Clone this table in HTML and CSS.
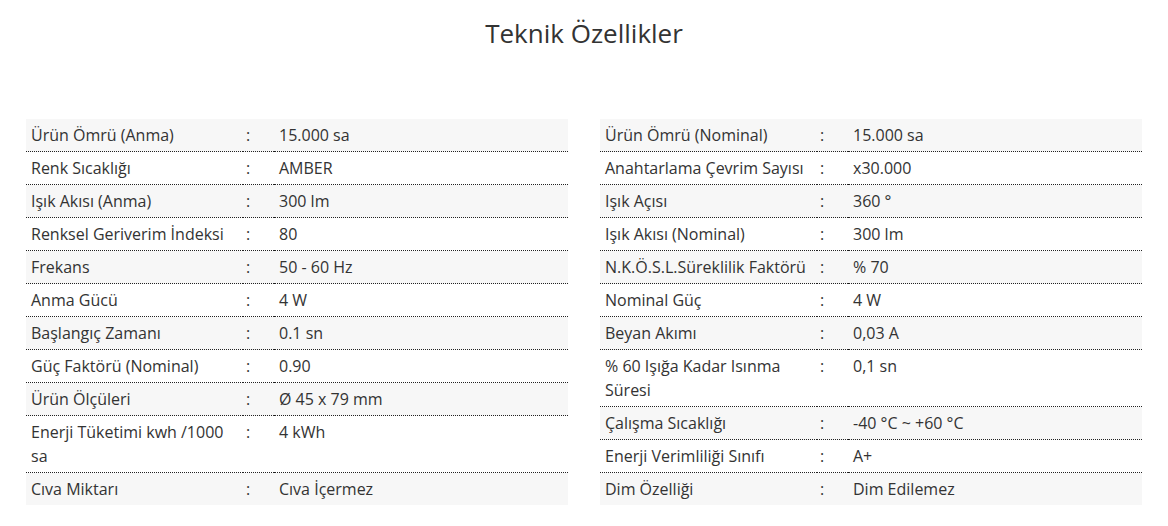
FILE: index.html
```html
<!DOCTYPE html>
<html lang="tr">
<head>
<meta charset="utf-8">
<title>Teknik Özellikler</title>
<link rel="stylesheet" href="styles.css">
</head>
<body>
<section class="specs">
  <h2 class="specs-title">Teknik Özellikler</h2>
  <div class="specs-grid">
    <table class="spec-table">
      <colgroup><col class="c-label"><col class="c-sep"><col></colgroup>
      <tbody>
        <tr><td>Ürün Ömrü (Anma)</td><td class="sep">:</td><td class="val">15.000 sa</td></tr>
        <tr><td>Renk Sıcaklığı</td><td class="sep">:</td><td class="val">AMBER</td></tr>
        <tr><td>Işık Akısı (Anma)</td><td class="sep">:</td><td class="val">300 lm</td></tr>
        <tr><td>Renksel Geriverim İndeksi</td><td class="sep">:</td><td class="val">80</td></tr>
        <tr><td>Frekans</td><td class="sep">:</td><td class="val">50 - 60 Hz</td></tr>
        <tr><td>Anma Gücü</td><td class="sep">:</td><td class="val">4 W</td></tr>
        <tr><td>Başlangıç Zamanı</td><td class="sep">:</td><td class="val">0.1 sn</td></tr>
        <tr><td>Güç Faktörü (Nominal)</td><td class="sep">:</td><td class="val">0.90</td></tr>
        <tr><td>Ürün Ölçüleri</td><td class="sep">:</td><td class="val">Ø 45 x 79 mm</td></tr>
        <tr><td>Enerji Tüketimi kwh /1000 sa</td><td class="sep">:</td><td class="val">4 kWh</td></tr>
        <tr><td>Cıva Miktarı</td><td class="sep">:</td><td class="val">Cıva İçermez</td></tr>
      </tbody>
    </table>
    <table class="spec-table">
      <colgroup><col class="c-label"><col class="c-sep"><col></colgroup>
      <tbody>
        <tr><td>Ürün Ömrü (Nominal)</td><td class="sep">:</td><td class="val">15.000 sa</td></tr>
        <tr><td>Anahtarlama Çevrim Sayısı</td><td class="sep">:</td><td class="val">x30.000</td></tr>
        <tr><td>Işık Açısı</td><td class="sep">:</td><td class="val">360 °</td></tr>
        <tr><td>Işık Akısı (Nominal)</td><td class="sep">:</td><td class="val">300 lm</td></tr>
        <tr><td>N.K.Ö.S.L.Süreklilik Faktörü</td><td class="sep">:</td><td class="val">% 70</td></tr>
        <tr><td>Nominal Güç</td><td class="sep">:</td><td class="val">4 W</td></tr>
        <tr><td>Beyan Akımı</td><td class="sep">:</td><td class="val">0,03 A</td></tr>
        <tr><td>% 60 Işığa Kadar Isınma Süresi</td><td class="sep">:</td><td class="val">0,1 sn</td></tr>
        <tr><td>Çalışma Sıcaklığı</td><td class="sep">:</td><td class="val">-40 °C ~ +60 °C</td></tr>
        <tr><td>Enerji Verimliliği Sınıfı</td><td class="sep">:</td><td class="val">A+</td></tr>
        <tr><td>Dim Özelliği</td><td class="sep">:</td><td class="val">Dim Edilemez</td></tr>
      </tbody>
    </table>
  </div>
</section>
</body>
</html>
```

FILE: styles.css
```css
html, body {
  margin: 0;
  padding: 0;
  background: #ffffff;
}

body {
  font-family: "Open Sans", "Liberation Sans", Arial, sans-serif;
  color: #333333;
}

.specs {
  padding: 0 26px;
}

.specs-title {
  margin: 15px 0 68px;
  font-size: 26px;
  font-weight: 400;
  line-height: normal;
  text-align: center;
  color: #333333;
}

.specs-grid {
  display: flex;
  gap: 32px;
  align-items: flex-start;
}

.spec-table {
  flex: 1 1 0;
  width: 100%;
  border-collapse: collapse;
  table-layout: fixed;
  font-size: 16px;
  line-height: 24px;
}

.c-label {
  width: 217px;
}

.c-sep {
  width: 31px;
}

.spec-table td {
  padding: 4px 5px;
  vertical-align: top;
  border-bottom: 1px dotted #222222;
}

.spec-table td.sep {
  padding-left: 3px;
  padding-right: 0;
}

.spec-table tr:nth-child(odd) td {
  background: #f7f7f7;
}

.spec-table tr:last-child td {
  border-bottom: none;
}
```
